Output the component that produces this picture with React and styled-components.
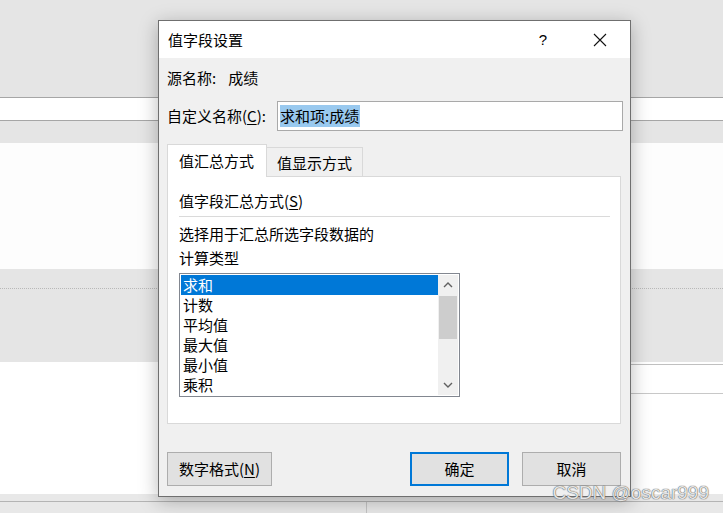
import React from 'react';
import styled, { createGlobalStyle } from 'styled-components';

const GlobalStyle = createGlobalStyle`
  html, body {
    margin: 0;
    padding: 0;
    width: 723px;
    height: 513px;
    overflow: hidden;
    font-family: "Noto Sans CJK SC", "Noto Sans", sans-serif;
  }
`;

const Screen = styled.div`
  position: relative;
  width: 723px;
  height: 513px;
  overflow: hidden;
  background: #ffffff;
`;

const Band = styled.div`
  height: ${p => p.h}px;
  background: ${p => p.bg || '#ffffff'};
  border-bottom: ${p => (p.line ? '1px solid #a6a6a6' : 'none')};
`;

const DottedBand = styled.div`
  height: 93px;
  background: #e5e5e5;
  padding-top: 19px;
  box-sizing: border-box;
  &::before {
    content: '';
    display: block;
    border-top: 1px dotted #b8b8b8;
  }
`;

const SheetRow = styled.div`
  height: 132px;
  display: flex;
  justify-content: flex-end;
`;

const RightCells = styled.div`
  width: 200px;
  padding-top: 2px;
  div {
    height: 28px;
    border-top: 1px solid #c0c0c0;
  }
  div + div {
    border-top: 1px solid #c8c8c8;
  }
`;

const StatusBar = styled.div`
  height: 19px;
  background: #e8e8e8;
  display: flex;
  flex-direction: column;
`;

const StatusLine = styled.div`
  height: 7px;
  border-bottom: 1px solid #b4b4b4;
`;

const StatusCells = styled.div`
  flex: 1;
  display: flex;
  div {
    width: 366px;
    border-right: 1px solid #c4c4c4;
  }
`;

const Dialog = styled.div`
  position: absolute;
  left: 158px;
  top: 20px;
  width: 473px;
  height: 477px;
  box-sizing: border-box;
  border: 1px solid #6f6f6f;
  background: #f0f0f0;
  box-shadow: 0 4px 18px rgba(0, 0, 0, 0.28);
  display: flex;
  flex-direction: column;
  color: #000;
  font-size: 15px;
`;

const TitleBar = styled.div`
  height: 37px;
  background: #ffffff;
  display: flex;
  align-items: center;
  padding-left: 9px;
  line-height: 20px;
`;

const Title = styled.div`
  flex: 1;
`;

const TitleButton = styled.div`
  width: ${p => p.w}px;
  height: 37px;
  display: flex;
  align-items: center;
  justify-content: center;
  font-family: "Liberation Sans", sans-serif;
  font-size: 15px;
`;

const Body = styled.div`
  flex: 1;
  padding: 0 9px 0 8px;
  display: flex;
  flex-direction: column;
`;

const TextRow = styled.div`
  height: 20px;
  line-height: 20px;
  margin-top: ${p => p.mt || 0}px;
  display: flex;
  white-space: nowrap;
`;

const Gap = styled.span`
  display: inline-block;
  width: ${p => p.w}px;
`;

const NameRow = styled.div`
  margin-top: 13px;
  height: 30px;
  display: flex;
  align-items: center;
`;

const NameLabel = styled.div`
  width: 110px;
  line-height: 20px;
  white-space: nowrap;
`;

const NameInput = styled.div`
  flex: 1;
  height: 30px;
  box-sizing: border-box;
  margin-right: -2px;
  background: #ffffff;
  border: 1px solid #a9a9a9;
  display: flex;
  align-items: center;
  padding-left: 2px;
`;

const Selected = styled.span`
  background: #99c9ef;
  line-height: 22px;
  padding-right: 1px;
`;

const Tabs = styled.div`
  margin-top: 13px;
  display: flex;
  align-items: flex-end;
  height: 33px;
  position: relative;
  z-index: 1;
`;

const Tab = styled.div`
  width: ${p => p.w}px;
  height: ${p => (p.active ? 33 : 30)}px;
  box-sizing: border-box;
  background: ${p => (p.active ? '#ffffff' : '#f0f0f0')};
  border: 1px solid #d9d9d9;
  border-bottom: ${p => (p.active ? 'none' : '1px solid #d9d9d9')};
  border-left: ${p => (p.first ? '1px solid #d9d9d9' : 'none')};
  display: flex;
  align-items: center;
  padding-left: ${p => (p.active ? 11 : 10)}px;
  padding-top: ${p => (p.active ? 0 : 2)}px;
  line-height: 20px;
  white-space: nowrap;
`;

const Panel = styled.div`
  margin-top: -1px;
  width: 454px;
  height: 248px;
  box-sizing: border-box;
  background: #ffffff;
  border: 1px solid #d9d9d9;
  padding: 14px 10px 0 11px;
`;

const Separator = styled.div`
  height: 1px;
  background: #dadada;
  margin: 5px 0 7px;
`;

const ListBox = styled.div`
  margin-top: 5px;
  width: 281px;
  height: 124px;
  box-sizing: border-box;
  border: 1px solid #828790;
  padding: 1px;
  display: flex;
  background: #ffffff;
`;

const Items = styled.div`
  flex: 1;
  overflow: hidden;
`;

const Item = styled.div`
  height: 20px;
  line-height: 20px;
  padding-left: 2px;
  background: ${p => (p.selected ? '#0078d7' : 'transparent')};
  color: ${p => (p.selected ? '#ffffff' : '#000000')};
  white-space: nowrap;
`;

const ScrollBar = styled.div`
  width: 20px;
  background: #f0f0f0;
  display: flex;
  flex-direction: column;
`;

const Arrow = styled.div`
  height: 20px;
  display: flex;
  align-items: center;
  justify-content: center;
`;

const Track = styled.div`
  flex: 1;
`;

const Thumb = styled.div`
  height: 43px;
  background: #cdcdcd;
  margin: 1px 1px 0 1px;
`;

const ButtonRow = styled.div`
  margin-top: 28px;
  display: flex;
  gap: 13px;
`;

const Button = styled.div`
  width: ${p => p.w}px;
  height: 34px;
  box-sizing: border-box;
  background: #e1e1e1;
  border: ${p => (p.primary ? '2px solid #0078d7' : '1px solid #adadad')};
  display: flex;
  align-items: center;
  justify-content: center;
  line-height: 20px;
  margin-left: ${p => (p.push ? 'auto' : '0')};
  white-space: nowrap;
`;

const Watermark = styled.div`
  position: absolute;
  right: 14px;
  bottom: 9px;
  font-family: "Liberation Sans", sans-serif;
  font-size: 19px;
  color: rgba(255, 255, 255, 0.85);
  text-shadow: 0 0 1px #555, 0 0 1px #555;
`;

const U = styled.span`
  text-decoration: underline;
  text-underline-offset: 2px;
`;

const Chevron = ({ up }) => (
  <svg width="10" height="6" viewBox="0 0 10 6">
    <polyline
      points={up ? '1,5 5,1 9,5' : '1,1 5,5 9,1'}
      fill="none"
      stroke="#606060"
      strokeWidth="1.4"
    />
  </svg>
);

const items = ['求和', '计数', '平均值', '最大值', '最小值', '乘积'];

export default function App() {
  return (
    <>
      <GlobalStyle />
      <Screen>
        <Band h={97} bg="#e5e5e5" line />
        <Band h={22} bg="#ffffff" line />
        <Band h={22} bg="#e5e5e5" />
        <Band h={126} bg="#fdfdfd" />
        <DottedBand />
        <SheetRow>
          <RightCells>
            <div />
            <div />
          </RightCells>
        </SheetRow>
        <StatusBar>
          <StatusLine />
          <StatusCells>
            <div />
          </StatusCells>
        </StatusBar>

        <Dialog>
          <TitleBar>
            <Title>值字段设置</Title>
            <TitleButton w={54}>?</TitleButton>
            <TitleButton w={60}>
              <svg width="14" height="14" viewBox="0 0 14 14">
                <path d="M1 1 L13 13 M13 1 L1 13" stroke="#111" strokeWidth="1.1" />
              </svg>
            </TitleButton>
          </TitleBar>
          <Body>
            <TextRow mt={10}>
              源名称:<Gap w={12} />成绩
            </TextRow>
            <NameRow>
              <NameLabel>
                自定义名称(<U>C</U>):
              </NameLabel>
              <NameInput>
                <Selected>求和项:成绩</Selected>
              </NameInput>
            </NameRow>
            <Tabs>
              <Tab w={100} active first>值汇总方式</Tab>
              <Tab w={96}>值显示方式</Tab>
            </Tabs>
            <Panel>
              <TextRow>
                值字段汇总方式(<U>S</U>)
              </TextRow>
              <Separator />
              <TextRow>选择用于汇总所选字段数据的</TextRow>
              <TextRow mt={4}>计算类型</TextRow>
              <ListBox>
                <Items>
                  {items.map((it, i) => (
                    <Item key={it} selected={i === 0}>{it}</Item>
                  ))}
                </Items>
                <ScrollBar>
                  <Arrow><Chevron up /></Arrow>
                  <Track><Thumb /></Track>
                  <Arrow><Chevron /></Arrow>
                </ScrollBar>
              </ListBox>
            </Panel>
            <ButtonRow>
              <Button w={105}>
                数字格式(<U>N</U>)
              </Button>
              <Button w={99} primary push>确定</Button>
              <Button w={99}>取消</Button>
            </ButtonRow>
          </Body>
        </Dialog>

        <Watermark>CSDN @oscar999</Watermark>
      </Screen>
    </>
  );
}
